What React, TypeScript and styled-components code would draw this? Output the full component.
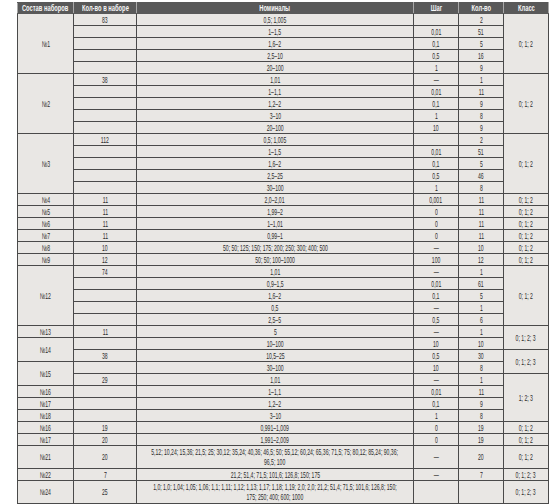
import React, { ReactNode } from "react";
import styled, { createGlobalStyle } from "styled-components";

interface Span {
  label: string;
  span?: number;
}

interface Row {
  set?: Span;
  count?: string;
  nominal: ReactNode;
  step?: string;
  qty?: string;
  klass?: Span;
  tall?: boolean;
}

const K = "0; 1; 2";
const K3 = "0; 1; 2; 3";

const rows: Row[] = [
  { set: { label: "№1", span: 5 }, count: "83", nominal: "0,5; 1,005", qty: "2", klass: { label: K, span: 5 } },
  { nominal: "1–1,5", step: "0,01", qty: "51" },
  { nominal: "1,6–2", step: "0,1", qty: "5" },
  { nominal: "2,5–10", step: "0,5", qty: "16" },
  { nominal: "20–100", step: "1", qty: "9" },
  { set: { label: "№2", span: 5 }, count: "38", nominal: "1,01", step: "—", qty: "1", klass: { label: K, span: 5 } },
  { nominal: "1–1,1", step: "0,01", qty: "11" },
  { nominal: "1,2–2", step: "0,1", qty: "9" },
  { nominal: "3–10", step: "1", qty: "8" },
  { nominal: "20–100", step: "10", qty: "9" },
  { set: { label: "№3", span: 5 }, count: "112", nominal: "0,5; 1,005", qty: "2", klass: { label: K, span: 5 } },
  { nominal: "1–1,5", step: "0,01", qty: "51" },
  { nominal: "1,6–2", step: "0,1", qty: "5" },
  { nominal: "2,5–25", step: "0,5", qty: "46" },
  { nominal: "30–100", step: "1", qty: "8" },
  { set: { label: "№4" }, count: "11", nominal: "2,0–2,01", step: "0,001", qty: "11", klass: { label: K } },
  { set: { label: "№5" }, count: "11", nominal: "1,99–2", step: "0", qty: "11", klass: { label: K } },
  { set: { label: "№6" }, count: "11", nominal: "1–1,01", step: "0", qty: "11", klass: { label: K } },
  { set: { label: "№7" }, count: "11", nominal: "0,99–1", step: "0", qty: "11", klass: { label: K } },
  {
    set: { label: "№8" },
    count: "10",
    nominal: "50; 50; 125; 150; 175; 200; 250; 300; 400; 500",
    step: "—",
    qty: "10",
    klass: { label: K },
  },
  { set: { label: "№9" }, count: "12", nominal: "50; 50; 100–1000", step: "100", qty: "12", klass: { label: K } },
  { set: { label: "№12", span: 5 }, count: "74", nominal: "1,01", step: "—", qty: "1", klass: { label: K, span: 5 } },
  { nominal: "0,9–1,5", step: "0,01", qty: "61" },
  { nominal: "1,6–2", step: "0,1", qty: "5" },
  { nominal: "0,5", step: "—", qty: "1" },
  { nominal: "2,5–5", step: "0,5", qty: "6" },
  { set: { label: "№13" }, count: "11", nominal: "5", step: "—", qty: "1", klass: { label: K3, span: 2 } },
  { set: { label: "№14", span: 2 }, nominal: "10–100", step: "10", qty: "10" },
  { count: "38", nominal: "10,5–25", step: "0,5", qty: "30", klass: { label: K3, span: 2 } },
  { set: { label: "№15", span: 2 }, nominal: "30–100", step: "10", qty: "8" },
  { count: "29", nominal: "1,01", step: "—", qty: "1", klass: { label: "1; 2; 3", span: 4 } },
  { set: { label: "№16" }, nominal: "1–1,1", step: "0,01", qty: "11" },
  { set: { label: "№17" }, nominal: "1,2–2", step: "0,1", qty: "9" },
  { set: { label: "№18" }, nominal: "3–10", step: "1", qty: "8" },
  { set: { label: "№16" }, count: "19", nominal: "0,991–1,009", step: "0", qty: "19", klass: { label: K } },
  { set: { label: "№17" }, count: "20", nominal: "1,991–2,009", step: "0", qty: "19", klass: { label: K } },
  {
    set: { label: "№21" },
    count: "20",
    nominal: (
      <>
        5,12; 10,24; 15,36; 21,5; 25; 30,12; 35,24; 40,36; 46,5; 50; 55,12; 60,24; 65,36; 71,5; 75; 80,12; 85,24; 90,36;
        <br />
        96,5; 100
      </>
    ),
    step: "—",
    qty: "20",
    klass: { label: K },
    tall: true,
  },
  {
    set: { label: "№22" },
    count: "7",
    nominal: "21,2; 51,4; 71,5; 101,6; 126,8; 150; 175",
    step: "—",
    qty: "7",
    klass: { label: K3 },
  },
  {
    set: { label: "№24" },
    count: "25",
    nominal: (
      <>
        1,0; 1,0; 1,04; 1,05; 1,06; 1,1; 1,11; 1,12; 1,13; 1,17; 1,18; 1,19; 2,0; 2,0; 21,2; 51,4; 71,5; 101,6; 126,8; 150;
        <br />
        175; 250; 400; 600; 1000
      </>
    ),
    klass: { label: K3 },
    tall: true,
  },
];

const GlobalStyle = createGlobalStyle`
  html, body {
    margin: 0;
    background: #ffffff;
  }
  body {
    font-family: "Liberation Sans", Arial, sans-serif;
  }
`;

const Page = styled.div`
  padding: 2px 0 0 17px;
`;

const Table = styled.table`
  border-collapse: collapse;
  table-layout: fixed;
  width: 525px;
  background: #e9e7e4;
  border: 1px solid #4e4e4e;
  border-right-color: #8a8a8a;
`;

const HeadCell = styled.th<{ $w: number }>`
  width: ${(p) => p.$w}px;
  height: 10px;
  padding: 0;
  background: #595959;
  color: #f6f6f6;
  font-size: 8.5px;
  font-weight: 700;
  line-height: 10px;
  border: 1px solid #595959;
  border-left-color: #a8a8a8;
  border-right-color: #a8a8a8;
`;

const Cell = styled.td<{ $tall?: boolean }>`
  height: ${(p) => (p.$tall ? 22 : 11)}px;
  padding: 0;
  color: #2c2c2c;
  font-size: 8.5px;
  line-height: 10px;
  vertical-align: middle;
  border: 1px solid #4a4a4a;
`;

// squeezes a line into the narrow type of the printed table
const Fit = styled.div`
  display: flex;
  justify-content: center;
  align-items: center;
`;

const Narrow = styled.span<{ $scale?: number }>`
  display: inline-block;
  flex-shrink: 0;
  white-space: nowrap;
  text-align: center;
  transform: scaleX(${(p) => p.$scale ?? 0.6});
  transform-origin: center;
`;

const columns = [
  { title: "Состав наборов", w: 55 },
  { title: "Кол-во в наборе", w: 62 },
  { title: "Номиналы", w: 276 },
  { title: "Шаг", w: 44 },
  { title: "Кол-во", w: 44 },
  { title: "Класс", w: 44 },
];

function Value({ children }: { children?: ReactNode }) {
  return (
    <Fit>
      <Narrow>{children}</Narrow>
    </Fit>
  );
}

export default function App() {
  return (
    <Page>
      <GlobalStyle />
      <Table>
        <thead>
          <tr>
            {columns.map((c) => (
              <HeadCell key={c.title} $w={c.w}>
                <Fit>
                  <Narrow $scale={0.68}>{c.title}</Narrow>
                </Fit>
              </HeadCell>
            ))}
          </tr>
        </thead>
        <tbody>
          {rows.map((r, i) => (
            <tr key={i}>
              {r.set && (
                <Cell rowSpan={r.set.span ?? 1}>
                  <Value>{r.set.label}</Value>
                </Cell>
              )}
              <Cell $tall={r.tall}>
                <Value>{r.count}</Value>
              </Cell>
              <Cell $tall={r.tall}>
                <Value>{r.nominal}</Value>
              </Cell>
              <Cell $tall={r.tall}>
                <Value>{r.step}</Value>
              </Cell>
              <Cell $tall={r.tall}>
                <Value>{r.qty}</Value>
              </Cell>
              {r.klass && (
                <Cell rowSpan={r.klass.span ?? 1}>
                  <Value>{r.klass.label}</Value>
                </Cell>
              )}
            </tr>
          ))}
        </tbody>
      </Table>
    </Page>
  );
}
